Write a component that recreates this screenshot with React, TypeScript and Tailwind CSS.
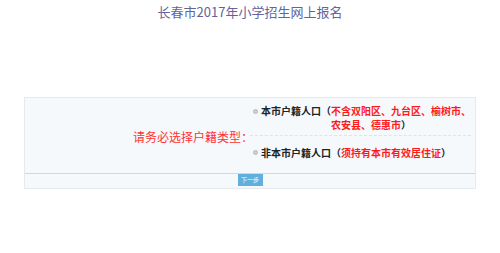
import React from "react";

const font = { fontFamily: '"Noto Sans CJK SC", "Noto Sans", sans-serif' };

function Radio() {
  return (
    <span className="inline-block w-[5px] h-[5px] rounded-full bg-[#cfcfcf] border border-[#b8b8b8] mr-[3px] shrink-0" />
  );
}

export default function App() {
  return (
    <div className="w-[500px] h-[253px] bg-white" style={font}>
      <div className="pt-[3px] text-center text-[13px] leading-[18px] text-[#6363a0]">
        长春市2017年小学招生网上报名
      </div>
      <div className="mt-[76px] mx-auto w-[452px] border border-[#e6eaee] bg-[#f5f9fc]">
        <div className="flex">
          <div className="w-[223px] shrink-0 flex items-center justify-end pt-[3px] text-[12px] text-[#ff3333] whitespace-nowrap">
            <span className="mr-[-5px]">请务必选择户籍类型：</span>
          </div>
          <div className="flex-1 flex flex-col pr-[10px]">
            <div className="h-[38px] flex items-start pt-[6px] border-b border-dashed border-[#dfe3e7] ml-[2px]">
              <div className="flex items-center h-[14px] pl-[3px]">
                <Radio />
              </div>
              <div className="text-[10px] leading-[14px] font-bold text-[#222] whitespace-nowrap shrink-0">
                本市户籍人口（
              </div>
              <div className="text-[10px] leading-[14px] font-bold whitespace-nowrap shrink-0">
                <div className="text-[#ff1a1a]">不含双阳区、九台区、榆树市、</div>
                <div>
                  <span className="text-[#ff1a1a]">农安县、德惠市</span>
                  <span className="text-[#222]">）</span>
                </div>
              </div>
            </div>
            <div className="h-[37px] flex items-center pl-[5px] pb-[4px]">
              <Radio />
              <span className="text-[10px] leading-[14px] font-bold text-[#222] whitespace-nowrap">
                非本市户籍人口（<span className="text-[#ff1a1a]">须持有本市有效居住证</span>）
              </span>
            </div>
          </div>
        </div>
        <div className="border-t border-[#c9dbe9] h-[15px] flex justify-center">
          <button className="w-[25px] h-[12px] bg-[#5fb0dd] text-white text-[6px] leading-[12px] p-0">
            下一步
          </button>
        </div>
      </div>
    </div>
  );
}
